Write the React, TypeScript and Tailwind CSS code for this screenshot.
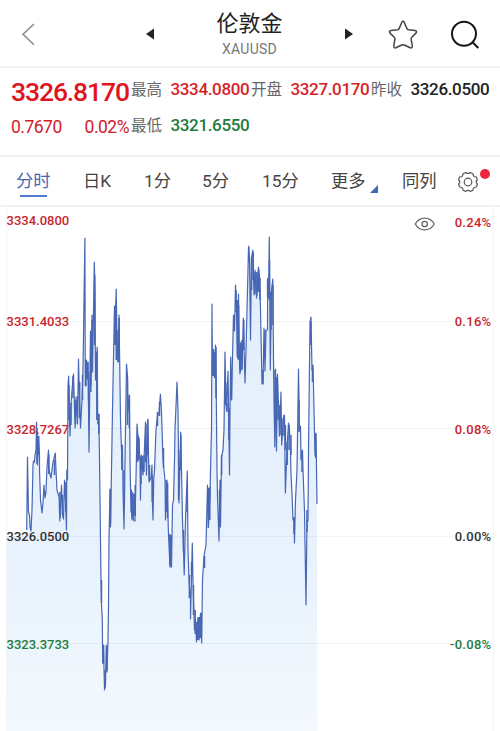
import clsx from 'clsx';

const UP = 'text-[#c9252d]';
const DOWN = 'text-[#1f7a3c]';
const FLAT = 'text-[#333]';

const TABS = [
  { label: '分时', className: 'w-[67px]', active: true },
  { label: '日K', className: 'w-[61px]' },
  { label: '1分', className: 'w-[58px]' },
  { label: '5分', className: 'w-[60px]' },
  { label: '15分', className: 'w-[69px]' },
  { label: '更多', className: 'w-[71px]', more: true },
  { label: '同列', className: 'w-[55px]' },
];

const AXIS = [
  { price: '3334.0800', pct: '0.24%', color: UP, left: 'top-[4px]', right: 'top-[6px]' },
  { price: '3331.4033', pct: '0.16%', color: UP, left: 'top-[105px]', right: 'top-[105px]' },
  { price: '3328.7267', pct: '0.08%', color: UP, left: 'top-[213px]', right: 'top-[213px]' },
  { price: '3326.0500', pct: '0.00%', color: FLAT, left: 'top-[320px]', right: 'top-[320px]' },
  { price: '3323.3733', pct: '-0.08%', color: DOWN, left: 'top-[428px]', right: 'top-[428px]' },
];

const LINE =
  '26.7,530 27.5,457 28.5,512 29.5,515 30,527 31,531 32,510 33,465 33.5,461 34.5,462 35,455 36,450 36.5,422 37.5,465 38.5,436 39.5,455 39.5,470 40.5,500 42,513 43,503 44,485 45,498 46,492 47,467 48.5,450 49,470 51,478 52,470 53,462 55.3,453 56,470 57,490 59,497 59.8,521 61.5,485 62.5,515 63.5,519 64.5,480 65.5,500 66.5,530 66.8,470 67.5,480 68,385 68.7,376 69.5,420 70,436 71,405 72,390 73.5,374 74.5,410 75.2,428 76,397 77.5,424 78.5,359 79.5,400 80.5,428 82,400 83,370 84.9,238 85.3,386 86.5,360 87,378 88,362 89,452 90.5,331 91,385 92,315 92.5,372 94.3,262 95,290 95.5,380 97.2,347 97.8,424 98.9,414 99.5,460 101,580 101.5,604 102.3,620 102.7,663 103.5,645 104.5,690 105.5,685 106.2,645 107,672 108,640 108.5,605 109,540 110,489 110.5,527 111.5,470 112.5,410 114.5,306 115,330 116.2,289 117,345 118,362 119,315 119.7,362 120.5,420 121.5,450 122.5,445 123,490 124,529 124.5,500 125,460 126.5,364 127.5,376 128,412 129.5,395 130,460 131,512 131.5,490 132,520 133,493 133.5,520 135,521 136.5,455 137,424 138,437 138.5,436 140,460 140.5,500 141,458 141.5,455 143,475 144,460 145.5,422 146.5,475 147.9,419 149,482 151,478 152,465 152.5,505 153,520 153.7,480 154.5,470 156,430 157.5,415 159,414 160.4,394 161.5,412 163,460 165,480 165.5,520 167,480 168.5,535 170,567 171.5,567 172.5,505 173.5,500 174.5,460 175,430 177,382 178,410 179,503 180.7,432 181.5,470 182.5,520 183.5,550 184.2,575 185.5,520 187.3,471 188,550 189,580 190.5,600 190.5,619 192.3,543 193,582 193.5,600 194.5,630 195.5,620 196.5,642 198,618 199,640 200.5,613 201.7,643 202.5,580 204,556 206,545 207.5,485 208.5,525 210,497 210.5,470 211.5,430 212,304 212.5,375 213.5,350 214,375 215.5,345 216.3,398 217,470 217.5,497 219,541 220,480 220.5,527 221.5,457 223,450 224,430 225,352 226,403 226.5,410 228,371 229,440 229.5,475 230,410 230.7,357 231.5,400 233.5,315 234.5,331 235.5,285 236.5,310 237.5,358 238.5,294 239.5,365 240,374 241,342 242,368 243.3,318 244,348 245,383 246,350 247,310 248.6,246 249.5,258 250.5,340 251.5,258 252.8,250 254,295 255,270 256.5,298 258.5,267 259.5,276 260.5,310 262,384 263,384 264,328 265,371 266,330 267.5,330 267.7,278 268.5,298 269.3,237 270.3,370 271.5,290 272.8,279 273.5,360 274,400 274.8,447 275.5,369 276.5,451 277.5,374 278.5,405 279.5,436 281,392 281.7,445 283,425 284.5,415 285.4,493 287,448 288.5,423 289.5,430 290.5,450 291,475 292,494 293,520 294,518 294.5,543 295.5,500 297,470 298.5,369 299.5,430 300.5,426 301,460 302.5,450 303,470 304.5,511 306,605 307,520 308,521 308.5,450 310,322 311,317 312,370 313,365 314,410 315,455 316,433 317,504';

// heavy trading stretches, [x, high, low]
const RANGES = [
  [37, 428, 464], [38.6, 436, 455], [48.8, 455, 474], [54.5, 460, 475], [60, 492, 518], [62.5, 495, 515], [65.8, 482, 512],
  [69, 385, 420], [71, 403, 425], [73, 376, 398], [75.5, 400, 424], [77.5, 396, 418], [79.7, 382, 418], [82.5, 375, 400],
  [86, 360, 386], [87.8, 362, 380], [88.6, 372, 400], [90.8, 335, 392], [92.2, 320, 370], [94.7, 275, 345], [96.8, 352, 420], [98.8, 414, 434],
  [101.5, 580, 603], [103.5, 645, 664], [105, 670, 688], [107, 646, 670], [110.5, 490, 524],
  [114.8, 308, 345], [116.3, 300, 360], [118, 330, 362], [119.2, 318, 362], [121.8, 446, 470], [124, 470, 500],
  [127.4, 377, 425], [129.3, 395, 428], [132, 492, 518], [134, 494, 516], [135.2, 485, 516],
  [137.6, 436, 462], [139, 438, 460], [141, 460, 484], [142.3, 456, 470], [144, 455, 472], [145.8, 424, 462], [147.6, 420, 455], [149.5, 465, 480], [152.2, 475, 502],
  [157.5, 412, 426], [159.5, 402, 416], [163.5, 448, 468], [166.2, 480, 512], [167.6, 483, 518], [169.8, 534, 565], [171.2, 535, 567],
  [178.6, 450, 500], [180.8, 435, 470], [183.5, 530, 552], [187, 493, 512], [189.4, 575, 598], [191.5, 562, 578], [193.5, 585, 615],
  [195.2, 610, 634], [196.8, 622, 640], [198.3, 617, 640], [199.8, 617, 638], [201.3, 613, 638], [204.5, 556, 568], [208.3, 488, 528], [209.8, 487, 520],
  [213.2, 349, 376], [214.6, 352, 378], [216, 347, 398], [219.5, 490, 525], [221.6, 455, 475], [225.8, 383, 405], [227, 403, 412], [229, 408, 440], [231.5, 370, 400],
  [234, 315, 331], [236, 290, 312], [237.4, 300, 356], [238.6, 305, 360], [240.4, 343, 372], [242, 340, 370], [243.8, 320, 350],
  [248.7, 247, 262], [251.6, 258, 290], [253.3, 252, 280], [255, 272, 294], [256.8, 272, 296], [258.5, 270, 292], [260, 278, 300],
  [262.8, 370, 384], [265, 330, 358], [267.6, 280, 297], [269.5, 260, 300], [271, 292, 330], [273, 285, 325],
  [275, 370, 410], [276.6, 377, 420], [278.4, 402, 420], [280, 405, 435], [282, 418, 436], [284, 415, 436], [285.4, 425, 450],
  [287.2, 442, 465], [289, 425, 450], [291, 435, 455], [294, 517, 534], [299, 400, 432], [302, 450, 472], [307, 510, 532],
  [310.8, 322, 345], [312.5, 368, 382], [315.6, 434, 458],
];

function Header() {
  return (
    <header className="flex h-[68px] items-center border-b-2 border-[#f2f2f2] pt-px text-[#222]">
      <svg className="ml-[20px] h-6 w-4" viewBox="0 0 16 24" fill="none" stroke="#888" strokeWidth="1.5">
        <path d="M14 2 3 12.2 14 22.8" />
      </svg>
      <svg className="ml-[110px] h-3 w-2" viewBox="0 0 8 12" fill="#222">
        <path d="M0 6 8 0.5V11.5Z" />
      </svg>
      <div className="ml-[45.5px] w-[100px] text-center">
        <h1 className="text-[22px] leading-[28px]">伦敦金</h1>
        <p className="mt-[3px] text-[14px] leading-4 tracking-[0.25px] text-[#777]">XAUUSD</p>
      </div>
      <svg className="ml-[45.5px] h-3 w-2" viewBox="0 0 8 12" fill="#222">
        <path d="M8 6 0 0.5V11.5Z" />
      </svg>
      <svg className="ml-[35px] h-[30px] w-[30px] shrink-0 translate-y-px" viewBox="0 0 30 30" fill="none" stroke="#444" strokeWidth="1.5" strokeLinejoin="round">
        <path d="M13.9 2.2Q15 .3 16.2 2.2L18.8 8.4Q19.3 9.6 20.5 9.8L27 10.5Q29.6 11 27.9 13.1L23.8 17.2Q22.9 18 23.1 19.2L24.3 25.6Q24.5 28.3 22.2 27.8L16.3 25Q15 24.4 13.8 25L7.9 27.8Q5.6 28.3 5.8 25.6L6.9 19.2Q7.1 18 6.3 17.2L2 13.1Q.5 11 3 10.5L9.5 9.8Q10.7 9.6 11.2 8.4Z" />
      </svg>
      <svg className="ml-[32px] h-[30px] w-[30px] shrink-0 translate-y-px" viewBox="0 0 30 30" fill="none" stroke="#151515" strokeWidth="2">
        <circle cx="14" cy="13.7" r="12" />
        <path d="m22.3 22 6 6" />
      </svg>
    </header>
  );
}

function Stat({ label, value, color }: { label: string; value: string; color: string }) {
  return (
    <div className="flex items-center whitespace-nowrap pt-[2px]">
      <span className="w-[39.5px] pt-px text-[15.5px] text-[#666]">{label}</span>
      <span className={clsx('text-[17px] font-medium tracking-[-0.35px]', color)}>{value}</span>
    </div>
  );
}

function Quote() {
  return (
    <section className="grid h-[89px] grid-cols-[120px_120px_120px_120px] grid-rows-[36px_36px] border-b-2 border-[#f2f2f2] pt-[3px] pl-[11px]">
      <div className="flex items-center pt-[6px] text-[26.5px] font-medium tracking-[-1.1px] text-[#e01420]">3326.8170</div>
      <Stat label="最高" value="3334.0800" color="text-[#d81e26]" />
      <Stat label="开盘" value="3327.0170" color="text-[#d81e26]" />
      <Stat label="昨收" value="3326.0500" color="text-[#222]" />
      <div className="flex w-[118px] items-center justify-between pt-[4px] text-[17.5px] tracking-[-0.5px] text-[#d0202a]">
        <span>0.7670</span>
        <span>0.02%</span>
      </div>
      <Stat label="最低" value="3321.6550" color={DOWN} />
    </section>
  );
}

function Tabs() {
  return (
    <nav className="flex h-[50px] items-center border-b-2 border-[#f2f2f2] pt-[2px] pl-[16px] text-[17.3px] text-[#444]">
      {TABS.map((tab) => (
        <div key={tab.label} className={clsx('relative whitespace-nowrap', tab.className, tab.active && 'text-[#4a68b0]')}>
          {tab.label}
          {tab.active && <span className="absolute -bottom-[2px] left-[4px] h-[2px] w-[27px] bg-[#4f7cd0]" />}
          {tab.more && (
            <svg className="absolute bottom-[2px] left-[39px] h-2 w-2" viewBox="0 0 8 8" fill="#4267b5">
              <path d="M8 0V8H0Z" />
            </svg>
          )}
        </div>
      ))}
      <div className="relative">
        <svg className="h-[22px] w-[22px]" viewBox="0 0 22 22" fill="none" stroke="#555" strokeWidth="1.2" strokeLinejoin="round">
          <path d="M8.7 1.5Q11 3.5 13.3 1.5L16 2.7Q15.9 5.9 19.3 6L20.4 8.7Q18.2 11 20.4 13.3L19.3 16Q15.9 16.1 16 19.3L13.3 20.4Q11 18.4 8.7 20.4L6 19.3Q6.1 16.1 2.7 16L1.6 13.3Q3.8 11 1.6 8.7L2.7 6Q6.1 5.9 6 2.7Z" />
          <circle cx="11" cy="11" r="3.8" />
        </svg>
        <span className="absolute -top-[2px] left-[23px] h-[10px] w-[10px] rounded-full bg-[#ee2440]" />
      </div>
    </nav>
  );
}

function Chart() {
  return (
    <section className="relative h-[524px] overflow-hidden">
      <svg className="block h-[524px] w-[500px]" viewBox="0 207 500 524" fill="none">
        <defs>
          <linearGradient id="area" x1="0" y1="240" x2="0" y2="731" gradientUnits="userSpaceOnUse">
            <stop offset="0" stopColor="#e2eefc" />
            <stop offset="0.65" stopColor="#e8f2fd" />
            <stop offset="1" stopColor="#f3f9fd" />
          </linearGradient>
        </defs>
        <path d={`M7 731V536H26.7L${LINE}V731Z`} fill="url(#area)" />
        <path d="M6.5 207V731M493.5 207V731" stroke="#f4f4f5" />
        <path d="M7 321.5H493M7 428.5H493M7 536.5H493M7 643.5H493" stroke="#8090a0" strokeOpacity="0.1" />
        <polyline points={LINE} stroke="#4767b5" strokeWidth="1.2" strokeLinejoin="round" />
        <path d={RANGES.map(([x, high, low]) => `M${x} ${high}V${low}`).join('')} stroke="#4767b5" strokeWidth="1.5" />
      </svg>
      {AXIS.map((row) => (
        <div key={row.price} className={clsx('text-[13px] leading-5 font-medium', row.color)}>
          <span className={clsx('absolute left-[6.5px]', row.left)}>{row.price}</span>
          <span className={clsx('absolute right-[8.5px] tracking-[0.3px]', row.right)}>{row.pct}</span>
        </div>
      ))}
      <svg className="absolute top-[9px] left-[414px] h-4 w-[22px]" viewBox="0 0 22 16" fill="none" stroke="#666" strokeWidth="1.3">
        <path d="M1.3 8C5.5 .2 16 .2 20.2 8 16 15.8 5.5 15.8 1.3 8Z" />
        <circle cx="10.7" cy="8" r="2.7" />
      </svg>
    </section>
  );
}

export default function App() {
  return (
    <main className="h-[731px] w-[500px] overflow-hidden bg-white font-[Roboto,'Noto_Sans_CJK_SC',sans-serif]">
      <Header />
      <Quote />
      <Tabs />
      <Chart />
    </main>
  );
}
